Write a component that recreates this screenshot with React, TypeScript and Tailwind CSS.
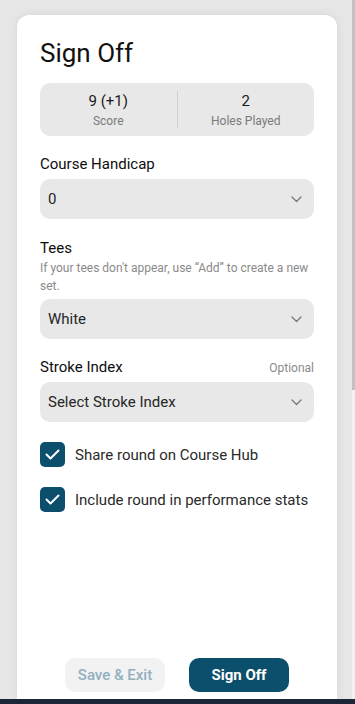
import React from "react";

function Chevron() {
  return (
    <svg width="11" height="7" viewBox="0 0 11 7" fill="none" className="shrink-0">
      <polyline points="1,1 5.5,5.5 10,1" stroke="#777" strokeWidth="1.3" strokeLinecap="round" strokeLinejoin="round" />
    </svg>
  );
}

function Select({ value }: { value: string }) {
  return (
    <div className="flex h-[40px] items-center justify-between rounded-[10px] bg-[#e8e8e8] pl-[8px] pr-[12px]">
      <span className="text-[15px] leading-[20px] text-[#262626]">{value}</span>
      <Chevron />
    </div>
  );
}

function Check({ label }: { label: string }) {
  return (
    <div className="flex items-center gap-[10px]">
      <div className="flex h-[25px] w-[25px] items-center justify-center rounded-[5px] bg-[#0b4f6c]">
        <svg width="25" height="25" viewBox="0 0 25 25" fill="none">
          <polyline points="6.5,12.5 10.5,16.5 18.5,8.5" stroke="white" strokeWidth="2" strokeLinecap="round" strokeLinejoin="round" />
        </svg>
      </div>
      <span className="text-[15px] leading-[20px] text-[#2a2a2a]">{label}</span>
    </div>
  );
}

const label = "text-[15px] font-normal leading-[20px] text-[#0d0d0d]";

export default function App() {
  return (
    <div className="flex h-[704px] w-[355px] flex-col overflow-hidden bg-[#e6e6e6] font-['Roboto',sans-serif]">
      <div className="flex min-h-0 flex-1">
        <div className="flex min-h-0 flex-1 flex-col pl-[17px] pr-[15px] pt-[15px]">
          <div className="flex flex-1 flex-col rounded-t-[12px] bg-white px-[23px] pt-[25px] shadow-[0_0_10px_rgba(0,0,0,0.07)]">
            <h1 className="text-[26px] leading-[26px] text-[#111]">Sign Off</h1>

            <div className="mt-[17px] flex h-[53px] items-center rounded-[10px] bg-[#e8e8e8]">
              <div className="flex flex-1 flex-col items-center">
                <span className="text-[15px] leading-[20px] text-[#1a1a1a]">9 (+1)</span>
                <span className="mt-[2px] text-[12px] leading-[16px] text-[#7a7a7a]">Score</span>
              </div>
              <div className="h-[37px] w-px bg-[#cfcfcf]" />
              <div className="flex flex-1 flex-col items-center">
                <span className="text-[15px] leading-[20px] text-[#1a1a1a]">2</span>
                <span className="mt-[2px] text-[12px] leading-[16px] text-[#7a7a7a]">Holes Played</span>
              </div>
            </div>

            <div className={`mt-[18px] ${label}`}>Course Handicap</div>
            <div className="mt-[5px]">
              <Select value="0" />
            </div>

            <div className={`mt-[19px] ${label}`}>Tees</div>
            <div className="mt-[1px] text-[12px] leading-[18px] text-[#8a8a8a]">
              If your tees don't appear, use “Add” to create a new set.
            </div>
            <div className="mt-[4px]">
              <Select value="White" />
            </div>

            <div className="mt-[18px] flex items-end justify-between">
              <span className={label}>Stroke Index</span>
              <span className="text-[12px] leading-[18px] text-[#8a8a8a]">Optional</span>
            </div>
            <div className="mt-[5px]">
              <Select value="Select Stroke Index" />
            </div>

            <div className="mt-[20px] flex flex-col gap-[20px]">
              <Check label="Share round on Course Hub" />
              <Check label="Include round in performance stats" />
            </div>

            <div className="mt-auto flex justify-center gap-[24px] pb-[7px]">
              <button className="h-[34px] w-[100px] rounded-[10px] bg-[#f2f2f2] text-[15px] font-medium text-[#91b0bf]">
                Save &amp; Exit
              </button>
              <button className="h-[34px] w-[100px] rounded-[10px] bg-[#0b4f6c] text-[15px] font-bold text-white">
                Sign Off
              </button>
            </div>
          </div>
        </div>
        <div className="flex w-[3px] flex-col bg-[#f1f1f1]">
          <div className="h-[390px] bg-[#c1c1c1]" />
        </div>
      </div>
      <div className="h-[5px] bg-[#1b2638]" />
    </div>
  );
}
